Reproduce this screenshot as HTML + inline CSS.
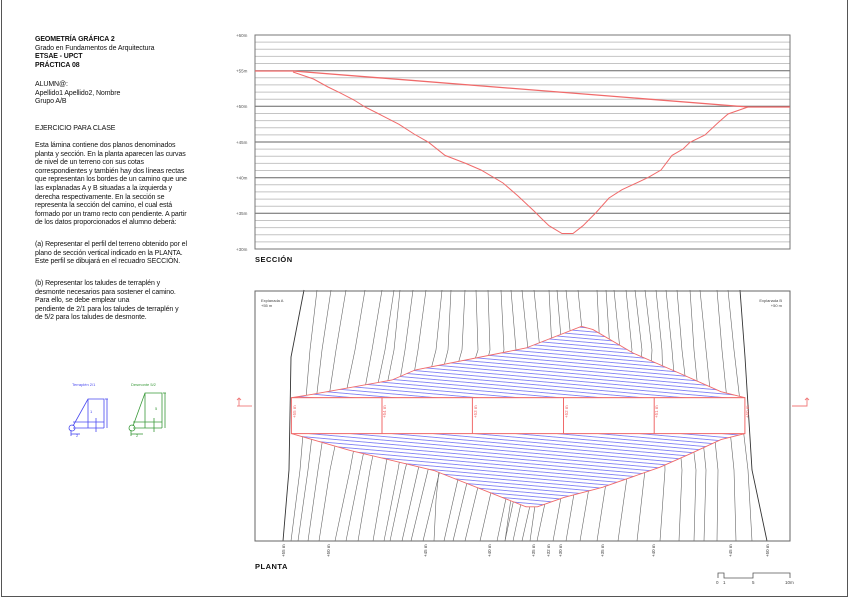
<!DOCTYPE html>
<html><head><meta charset="utf-8"><style>
html,body{margin:0;padding:0;background:#fff}
body{width:848px;height:599px;position:relative;overflow:hidden;font-family:"Liberation Sans",sans-serif}
.frame{position:absolute;left:1px;top:-1px;width:845px;height:597px;border:1px solid #555;border-top:none}
.t{position:absolute;left:35px;font-size:7px;line-height:8.6px;color:#111;letter-spacing:-0.1px;white-space:nowrap}
</style></head><body>
<div class="frame"></div>
<div class="t" style="top:36px;font-weight:bold">GEOMETRÍA GRÁFICA 2<br><span style="font-weight:normal">Grado en Fundamentos de Arquitectura</span><br>ETSAE - UPCT<br>PRÁCTICA 08</div>
<div class="t" style="top:81px">ALUMN@:<br>Apellido1 Apellido2, Nombre<br>Grupo A/B</div>
<div class="t" style="top:125px">EJERCICIO PARA CLASE</div>
<div class="t" style="top:142px">Esta lámina contiene dos planos denominados<br>planta y sección. En la planta aparecen las curvas<br>de nivel de un terreno con sus cotas<br>correspondientes y también hay dos líneas rectas<br>que representan los bordes de un camino que une<br>las explanadas A y B situadas a la izquierda y<br>derecha respectivamente. En la sección se<br>representa la sección del camino, el cual está<br>formado por un tramo recto con pendiente. A partir<br>de los datos proporcionados el alumno deberá:</div>
<div class="t" style="top:241px">(a) Representar el perfil del terreno obtenido por el<br>plano de sección vertical indicado en la PLANTA.<br>Este perfil se dibujará en el recuadro SECCIÓN.</div>
<div class="t" style="top:280px">(b) Representar los taludes de terraplén y<br>desmonte necesarios para sostener el camino.<br>Para ello, se debe emplear una<br>pendiente de 2/1 para los taludes de terraplén y<br>de 5/2 para los taludes de desmonte.</div>

<svg width="848" height="599" style="position:absolute;left:0;top:0" xmlns="http://www.w3.org/2000/svg">
<defs>
<pattern id="h" patternUnits="userSpaceOnUse" width="40" height="3.6" patternTransform="rotate(5)">
<rect width="40" height="3.6" fill="#fff"/><line x1="0" y1="1.8" x2="40" y2="1.8" stroke="#5a5af2" stroke-width="0.7"/>
</pattern>
</defs>
<g stroke-width="1">
<g stroke="#c4c4c4">
<line x1="255" x2="790" y1="42.1" y2="42.1"/><line x1="255" x2="790" y1="49.3" y2="49.3"/><line x1="255" x2="790" y1="56.4" y2="56.4"/><line x1="255" x2="790" y1="63.5" y2="63.5"/>
<line x1="255" x2="790" y1="77.8" y2="77.8"/><line x1="255" x2="790" y1="84.9" y2="84.9"/><line x1="255" x2="790" y1="92.1" y2="92.1"/><line x1="255" x2="790" y1="99.2" y2="99.2"/>
<line x1="255" x2="790" y1="113.5" y2="113.5"/><line x1="255" x2="790" y1="120.6" y2="120.6"/><line x1="255" x2="790" y1="127.7" y2="127.7"/><line x1="255" x2="790" y1="134.9" y2="134.9"/>
<line x1="255" x2="790" y1="149.1" y2="149.1"/><line x1="255" x2="790" y1="156.3" y2="156.3"/><line x1="255" x2="790" y1="163.4" y2="163.4"/><line x1="255" x2="790" y1="170.5" y2="170.5"/>
<line x1="255" x2="790" y1="184.8" y2="184.8"/><line x1="255" x2="790" y1="191.9" y2="191.9"/><line x1="255" x2="790" y1="199.1" y2="199.1"/><line x1="255" x2="790" y1="206.2" y2="206.2"/>
<line x1="255" x2="790" y1="220.5" y2="220.5"/><line x1="255" x2="790" y1="227.6" y2="227.6"/><line x1="255" x2="790" y1="234.7" y2="234.7"/><line x1="255" x2="790" y1="241.9" y2="241.9"/>
</g>
<g stroke="#666">
<line x1="255" x2="790" y1="70.7" y2="70.7"/><line x1="255" x2="790" y1="106.3" y2="106.3"/><line x1="255" x2="790" y1="142" y2="142"/><line x1="255" x2="790" y1="177.7" y2="177.7"/><line x1="255" x2="790" y1="213.3" y2="213.3"/>
</g>
<rect x="255" y="35" width="535" height="214" fill="none" stroke="#777"/>
</g>
<g font-size="4.5" fill="#555" font-family="Liberation Sans,sans-serif">
<text x="236" y="37">+60m</text><text x="236" y="72.5">+55m</text><text x="236" y="108">+50m</text><text x="236" y="144">+45m</text><text x="236" y="179.5">+40m</text><text x="236" y="215">+35m</text><text x="236" y="251">+30m</text>
</g>
<g fill="none" stroke="#f06a6a" stroke-width="1">
<polyline points="255,71 293,71 748,107 790,107" stroke-width="1.3"/>
<polyline points="293,72 313.5,79 328,87 339.5,92.6 354,100 365,107 380,114.5 399,124.3 414,134 428.6,142.3 445,155.4 466,163.5 481,170 503,183 518,196 534,211 542,219 549,225.7 562,233.5 573,233.5 583,225.7 596,212.6 609,198 622,189.7 648,177.6 661,170 672,155.4 683,149 690,142.3 705,135 718,122.7 728,114 748,107"/>
</g>
<text x="255" y="262" font-size="7.5" font-weight="bold" letter-spacing="0.5" fill="#111">SECCIÓN</text>

<g fill="none" stroke="#666" stroke-width="0.6">
<polyline points="304,290 291,357 289,470 283,541" stroke="#333" stroke-width="0.9"/>
<polyline points="317,290 310,350 300,470 291,541"/>
<polyline points="331,290 322,350 308,470 298,541"/>
<polyline points="346,290 336,350 318,470 308,541"/>
<polyline points="365,290 355,350 330,470 319,541"/>
<polyline points="382,290 372,350 350,470 335,541"/>
<polyline points="394,290 385,350 360,470 346,541"/>
<polyline points="400,290 394,350 370,470 358,541"/>
<polyline points="413,290 405,350 385,470 373,541"/>
<polyline points="426,290 418,350 398,470 384,541"/>
<polyline points="442,290 436,350 405,470 390,541"/>
<polyline points="451,290 448,350 418,470 402,541"/>
<polyline points="465,290 462,350 428,470 411,541"/>
<polyline points="476,290 478,350 440,470 423,541"/>
<polyline points="488,290 490,350 460,470 444,541"/>
<polyline points="501,290 504,350 470,470 453,541"/>
<polyline points="511,290 516,350 482,470 465,541"/>
<polyline points="522,290 528,350 496,470 480,541"/>
<polyline points="534,290 540,350 512,470 497,541"/>
<polyline points="549,290 552,350 520,470 505,541"/>
<polyline points="557,290 562,350 528,470 513,541"/>
<polyline points="566,290 572,350 538,470 522,541"/>
<polyline points="578,290 584,350 552,470 537,541"/>
<polyline points="597,290 600,350 566,470 553,541"/>
<polyline points="606,290 610,350 578,470 566,541"/>
<polyline points="614,290 620,350 592,470 580,541"/>
<polyline points="626,290 632,350 608,470 597,541"/>
<polyline points="635,290 642,350 628,470 618,541"/>
<polyline points="645,290 652,350 645,470 637,541"/>
<polyline points="656,290 662,350 665,470 660,541"/>
<polyline points="666,290 672,350 682,470 679,541"/>
<polyline points="677,290 682,350 696,470 694,541"/>
<polyline points="690,290 694,350 706,470 704,541"/>
<polyline points="700,290 706,350 718,470 717,541"/>
<polyline points="717,290 722,350 734,470 736,541"/>
<polyline points="728,290 734,350 748,470 752,541"/>
<polyline points="740,290 745,357 752,470 767,541" stroke="#333" stroke-width="0.9"/>
<polyline points="520,433 515,470 505,541" />
<polyline points="440,460 436,500 434,541"/>
<polyline points="540,470 530,541"/>
</g>
<polygon points="291.4,397.7 311.7,394.4 392,380 415,370 526,348 581.5,326.3 593,329.6 633,353 679,373 721,391.7 745,397.7" fill="url(#h)" stroke="#f06a6a" stroke-width="0.9"/>
<polygon points="291.4,433.6 350,450.4 434,470.5 526,506.8 537.4,506.8 564,497.4 602.5,487.3 660,467.2 690.5,453.7 721,439.6 745,433.6" fill="url(#h)" stroke="#f06a6a" stroke-width="0.9"/>
<rect x="291.4" y="397.7" width="453.5" height="35.9" fill="#fff" stroke="#f06a6a" stroke-width="1"/>
<g stroke="#f06a6a" stroke-width="1">
<line x1="382" y1="397.7" x2="382" y2="433.6"/><line x1="472.4" y1="397.7" x2="472.4" y2="433.6"/><line x1="563.5" y1="397.7" x2="563.5" y2="433.6"/><line x1="654.2" y1="397.7" x2="654.2" y2="433.6"/>
</g>
<g font-size="4.5" fill="#f06a6a" font-family="Liberation Sans,sans-serif">
<text transform="translate(296,418) rotate(-90)">+55 m</text><text transform="translate(386,418) rotate(-90)">+54 m</text><text transform="translate(477,418) rotate(-90)">+53 m</text><text transform="translate(568,418) rotate(-90)">+52 m</text><text transform="translate(658,418) rotate(-90)">+51 m</text><text transform="translate(749,418) rotate(-90)">+50 m</text>
</g>
<rect x="255" y="291" width="535" height="250" fill="none" stroke="#666" stroke-width="1"/>
<g fill="none" stroke="#f07a7a" stroke-width="0.9">
<polyline points="237,406 252,406"/><polyline points="239,406 239,398"/><polyline points="237,400 239,398 241,400"/>
<polyline points="792,406 807,406 807,398"/><polyline points="805,400 807,398 809,400"/>
</g>
<g font-size="4" fill="#444" font-family="Liberation Sans,sans-serif">
<text x="261" y="302">Explanada A</text><text x="261" y="307">+55 m</text>
<text x="782" y="302" text-anchor="end">Explanada B</text><text x="782" y="307" text-anchor="end">+50 m</text>
</g>
<g font-size="4.5" fill="#444" font-family="Liberation Sans,sans-serif">
<text transform="translate(285,557) rotate(-90)">+55 m</text><text transform="translate(330,557) rotate(-90)">+50 m</text><text transform="translate(427,557) rotate(-90)">+45 m</text><text transform="translate(491,557) rotate(-90)">+40 m</text><text transform="translate(535,557) rotate(-90)">+35 m</text><text transform="translate(550,557) rotate(-90)">+32 m</text><text transform="translate(562,557) rotate(-90)">+30 m</text><text transform="translate(604,557) rotate(-90)">+35 m</text><text transform="translate(655,557) rotate(-90)">+40 m</text><text transform="translate(732,557) rotate(-90)">+45 m</text><text transform="translate(769,557) rotate(-90)">+50 m</text>
</g>
<text x="255" y="569" font-size="7.5" font-weight="bold" letter-spacing="0.5" fill="#111">PLANTA</text>
<g fill="none" stroke="#555" stroke-width="0.8">
<polyline points="718,578 718,573 724,573 724,578 753,578 753,573 790,573 790,578"/>
</g>
<g font-size="4.5" fill="#444"><text x="716" y="584">0</text><text x="723" y="584">1</text><text x="752" y="584">5</text><text x="785" y="584">10m</text></g>

<text x="72" y="386" font-size="4" fill="#4a4af0">Terraplén 2/1</text>
<text x="131" y="386" font-size="4" fill="#3a9a3a">Desmonte 5/2</text>
<g fill="none" stroke="#4a4af0" stroke-width="0.8">
<polyline points="73,426 88,399 104,399 104,428"/><line x1="73" y1="422" x2="104" y2="422"/><line x1="73" y1="428" x2="104" y2="428"/>
<circle cx="72" cy="428" r="3"/><line x1="88" y1="399" x2="88" y2="428"/>
<line x1="105" y1="399" x2="108" y2="399"/><line x1="107" y1="399" x2="107" y2="428"/>
<line x1="96" y1="418" x2="96" y2="432"/><line x1="71" y1="434" x2="80" y2="434"/><line x1="71" y1="430" x2="71" y2="436"/>
<text x="90" y="413" font-size="4" fill="#4a4af0" stroke="none">1</text><text x="76" y="437" font-size="4" fill="#4a4af0" stroke="none">2</text>
</g>
<g fill="none" stroke="#3a9a3a" stroke-width="0.8">
<polyline points="133,426 145,393 162,393 162,428"/><line x1="133" y1="422" x2="162" y2="422"/><line x1="133" y1="428" x2="162" y2="428"/>
<circle cx="132" cy="428" r="3"/><line x1="145" y1="393" x2="145" y2="428"/>
<line x1="163" y1="393" x2="166" y2="393"/><line x1="165" y1="393" x2="165" y2="428"/>
<line x1="154" y1="418" x2="154" y2="432"/><line x1="131" y1="434" x2="143" y2="434"/><line x1="131" y1="430" x2="131" y2="436"/>
<text x="155" y="410" font-size="4" fill="#3a9a3a" stroke="none">5</text><text x="136" y="437" font-size="4" fill="#3a9a3a" stroke="none">2</text>
</g>
</svg>
</body></html>
